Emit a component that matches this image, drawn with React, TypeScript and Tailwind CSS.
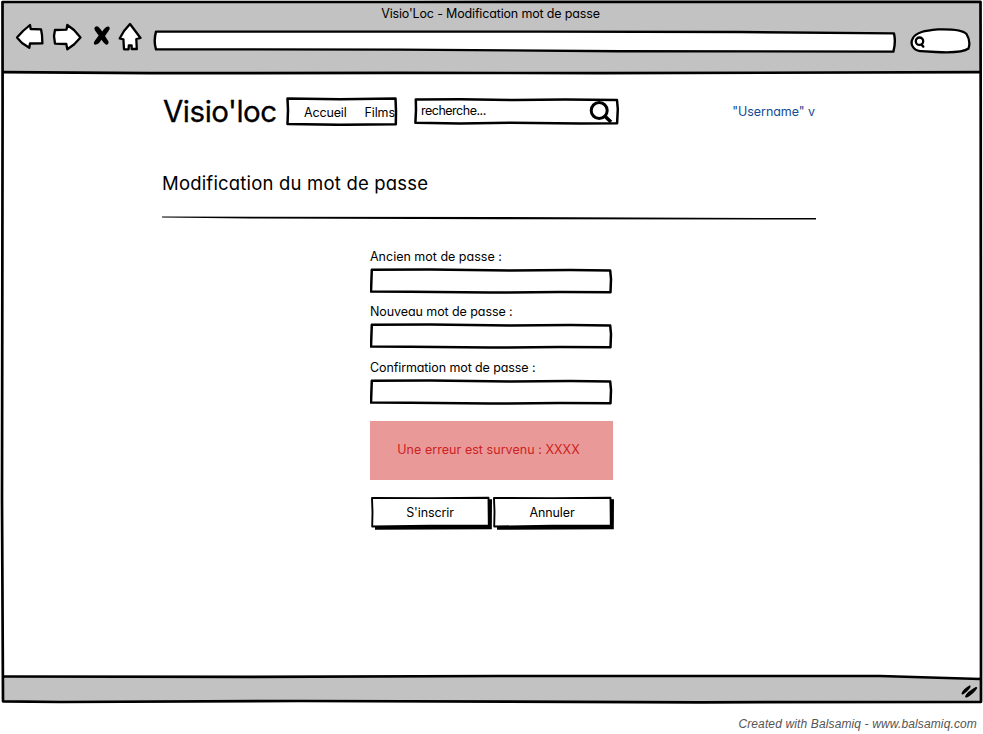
import React from "react";

const fieldPath = "M371.8 269.7 L430 269.6 L510 270.4 L570 270 L610.2 270.5 L611 279 L610.5 292.2 L560 292 L490 292.6 L410 291.8 L371 291.6 L371.4 281 Z";

function Toolbar() {
  return (
    <div className="flex h-[34px] pl-3.5">
      <svg className="h-[34px] w-8 shrink-0" viewBox="14 20 32 34" fill="#fff" stroke="#000" strokeWidth="2.3" strokeLinejoin="round">
        <path d="M17 37.5 L23 31 L30 25 L30.7 29 L41 29.3 L42 35 L42.4 43.3 L30 43.5 L29.3 47.8 L22 43 Z" />
      </svg>
      <svg className="ml-[5px] h-[34px] w-[33px] shrink-0" viewBox="51 20 33 34" fill="#fff" stroke="#000" strokeWidth="2.3" strokeLinejoin="round">
        <path d="M55 30 L66.5 29.6 L67.3 25 L74 30 L80.5 37.5 L74 44.5 L67.3 49.3 L66.3 44 L55 43.7 L54 36 Z" />
      </svg>
      <svg className="ml-[7px] h-[34px] w-[22px] shrink-0" viewBox="91 20 22 34" fill="#000">
        <path d="M95 27 Q97.5 25.2 99.5 28 L102.3 31.5 Q105.5 26.3 108.5 26.5 Q111 28 108.5 31 L105 36 L108.5 41.5 Q108.8 44.7 106.2 44.8 Q103.5 43 101.4 39.8 Q98.5 45 95 44.7 Q92.6 43.5 95 40.5 L98.7 35.6 L95 30.5 Q93.6 28.2 95 27 Z" />
      </svg>
      <svg className="ml-1 h-[34px] w-[26px] shrink-0" viewBox="117 20 26 34" fill="#fff" stroke="#000" strokeWidth="2.3" strokeLinejoin="round">
        <path d="M130 24 L140.5 38 L136.3 39 L136.8 49 L131.7 49 L131.6 45.5 L128.8 45.5 L128.6 49.3 L124 49.3 L123.4 39.3 L119.7 38.5 L124 31 Z" />
      </svg>
      <svg className="ml-[9px] h-[34px] w-[745px] shrink-0" viewBox="152 20 745 34" fill="#fff" stroke="#000" strokeWidth="2.4" strokeLinejoin="round">
        <path d="M156 31.6 L540 31.6 L740 32 L894 33.4 Q896 42 893.4 51.6 L620 51.2 L400 49.6 L156 49.3 Q153.4 41 156 31.6 Z" />
      </svg>
      <svg className="ml-3 h-[34px] w-[63px] shrink-0" viewBox="909 20 63 34" fill="#fff" stroke="#000" strokeWidth="2.3" strokeLinecap="round">
        <path d="M920 51.2 C913 50 910 44 912.5 39 C915 32 926 30.5 938 29.4 C952 29 963 30 966.5 34 C969 38 970 44 968.5 48.5 C964 52 948 52.6 936 52 L921 51.2 Z" />
        <circle cx="919.5" cy="41.2" r="3.7" />
        <path d="M921.3 44.5 L923.3 46.6" strokeWidth="2.4" />
      </svg>
    </div>
  );
}

function Navigation() {
  return (
    <div className="flex h-10 items-start pt-1">
      <div className="-mt-[3px] ml-[1px] w-[123px] whitespace-nowrap text-[29.5px] leading-[36px] tracking-[-0.48px] [-webkit-text-stroke:0.3px_#000]">Visio'loc</div>
      <nav className="relative h-[30px] w-[112px]">
        <svg className="absolute inset-0 h-full w-full" viewBox="286 96 112 30" fill="#fff" stroke="#000" strokeWidth="2.5" strokeLinejoin="round">
          <path d="M287.5 98.5 L340 99.2 L395.5 98.5 L396 111 L395.8 124.3 L340 124.8 L287.5 124 L288 110 Z" />
        </svg>
        <div className="relative flex gap-[18px] whitespace-nowrap pl-[18px] pt-[9px] text-[12.5px] leading-4 tracking-[-0.15px]">
          <a>Accueil</a>
          <a>Films</a>
        </div>
      </nav>
      <div className="relative ml-4 h-[30px] w-[206px]">
        <svg className="absolute inset-0 h-full w-full" viewBox="414 96 206 30" fill="none" stroke="#000" strokeWidth="2.5" strokeLinejoin="round">
          <path d="M415.8 99.5 L460 99.3 L515 100 L565 99.5 L617 100 L617.8 109 L617.1 123.2 L580 123.4 L510 122.8 L460 123.5 L415.4 122.8 L416 110 Z" />
          <circle cx="599.2" cy="110.5" r="8" strokeWidth="3" />
          <path d="M604.5 115.8 L611 122" strokeWidth="3.6" />
        </svg>
        <div className="relative pl-[7px] pt-[7px] text-[12.5px] leading-4 tracking-[-0.5px]">recherche...</div>
      </div>
      <div className="ml-auto mr-[1px] whitespace-nowrap pt-2 text-[12.5px] leading-4 tracking-[-0.05px] text-[#144a93]">"Username" v</div>
    </div>
  );
}

function Field({ label, spacing }: { label: string; spacing: string }) {
  return (
    <label className={`block ${spacing}`}>
      <span className="block h-5 whitespace-nowrap pt-px text-[12.5px] leading-4">{label}</span>
      <svg className="block h-[27px] w-[243px]" viewBox="370 268 243 27" fill="#fff" stroke="#000" strokeWidth="2.5" strokeLinejoin="round">
        <path d={fieldPath} />
      </svg>
    </label>
  );
}

function SketchButton({ children }: { children: React.ReactNode }) {
  return (
    <button className="relative h-[34px] w-[122px] pb-0.5 pr-[2px] text-[12.5px] leading-4 tracking-[-0.1px]">
      <svg className="absolute inset-0 h-full w-full" viewBox="370 496 122 34" strokeLinejoin="round">
        <path d="M375 499.5 L492 499.2 L491.8 529.2 L375 529.7 Z" fill="#000" />
        <path d="M372 498 L430 498.1 L488.5 497.8 L488.8 525.5 L430 525.8 L372.2 526.5 L372.5 512 Z" fill="#fff" stroke="#000" strokeWidth="1.9" />
      </svg>
      <span className="relative top-px">{children}</span>
    </button>
  );
}

export default function App() {
  return (
    <div className="relative flex h-[734px] w-[983px] flex-col overflow-hidden bg-white font-['Inter','Liberation_Sans',sans-serif] text-black [font-feature-settings:'cv11']">
      <header className="ml-[3px] mr-[2px] mt-0.5 h-[71px] bg-[#c2c2c2]">
        <div className="-ml-[3px] h-[18px] pt-1 text-center text-[12.5px] leading-4 tracking-[-0.16px]">Visio'Loc - Modification mot de passe</div>
        <div className="-ml-[3px]"><Toolbar /></div>
      </header>
      <main className="ml-[162px] h-[604px] w-[654px] pt-[19px]">
        <Navigation />
        <h1 className="mt-[39px] h-[34px] whitespace-nowrap text-[18.5px] leading-6 tracking-[0.19px]">Modification du mot de passe</h1>
        <svg className="mt-[11px] block h-1 w-full" viewBox="162 216 654 4" fill="#000">
          <path d="M162 216.6 L500 217 L816 218.1 L816 219.5 L500 219.2 L250 218.5 L162 217.6 Z" />
        </svg>
        <form className="ml-[208px] mt-[28px] w-[244px]">
          <Field label="Ancien mot de passe :" spacing="h-[55px] tracking-[0px]" />
          <Field label="Nouveau mot de passe :" spacing="h-14 tracking-[-0.08px]" />
          <Field label="Confirmation mot de passe :" spacing="h-14 tracking-[-0.1px]" />
          <div className="mt-1.5 flex h-[59px] w-[243px] items-center justify-center bg-[#ea9999] pb-0.5 pr-1.5 text-[12.5px] leading-4 tracking-[0.05px] text-[#cc2222]">Une erreur est survenu : XXXX</div>
          <div className="mt-4 flex">
            <SketchButton>S'inscrir</SketchButton>
            <SketchButton>Annuler</SketchButton>
          </div>
        </form>
      </main>
      <div className="ml-[3px] mr-[2px] h-[24px] bg-[#c2c2c2]" />
      <footer className="mr-[6px] mt-[15px] text-right font-['Liberation_Sans',sans-serif] text-[12px] italic leading-4 tracking-[0.13px] text-[#555]">Created with Balsamiq - www.balsamiq.com</footer>
      <svg className="pointer-events-none absolute inset-0 h-full w-full" viewBox="0 0 983 734" fill="none" stroke="#000" strokeWidth="2.7" strokeLinejoin="round">
        <path d="M870 674 L979 674 L979 679 L900 677 Z" fill="#fff" stroke="none" />
        <path d="M2.5 2 L400 2 L980.5 1.8 L980.7 100 L981 500 L981 701.8 L700 702.3 L300 701 L60 702 L3 701.3 L2 500 L2.6 100 Z" />
        <path d="M3 72.2 L150 73.2 L400 72.8 L600 73.2 L980 72.2" />
        <path d="M3 676.5 L250 676.8 L500 676 L880 676 L980 679" />
        <path d="M961.4 693.6 Q963 689 969.8 685.3 Q971.5 685.8 969.5 688.8 Q966 693 962.6 694.8 Z M965 696.5 Q966.5 692 975.8 687 Q978.5 686.6 976 690 Q971 696 966 697.8 Z" fill="#000" stroke="none" />
      </svg>
    </div>
  );
}
